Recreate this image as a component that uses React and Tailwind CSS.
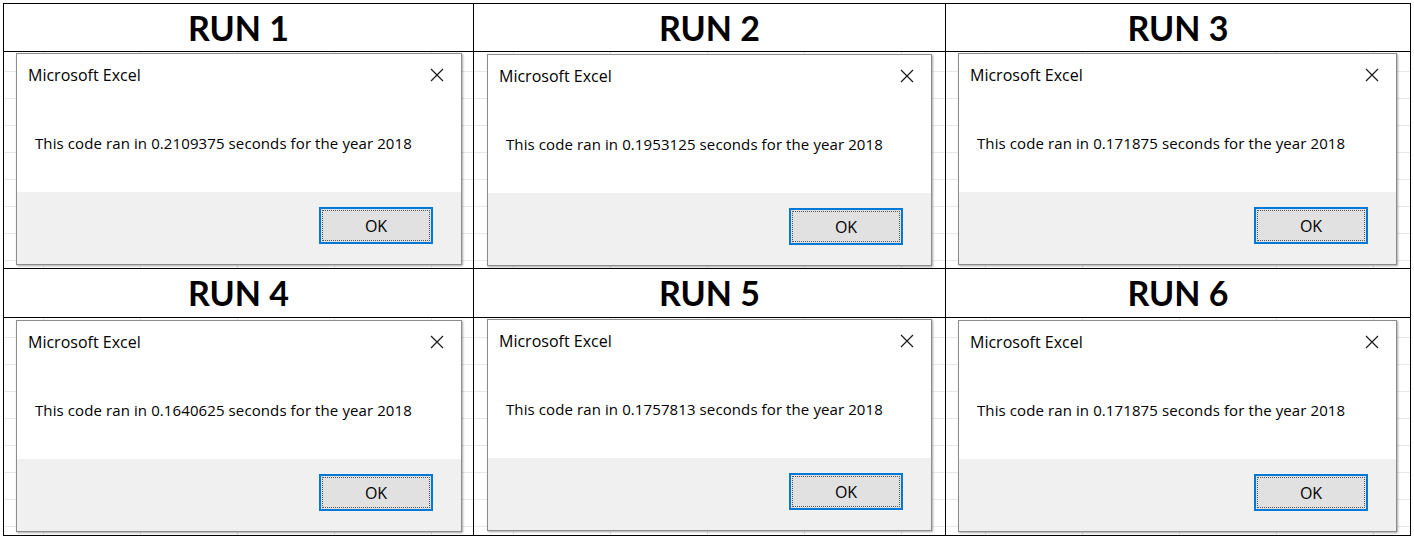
import React from 'react';

const runs = [
    { n: 1, time: '0.2109375', ml: 'ml-[12px]', mt: 'mt-[1px]', w: 'w-[446px]' },
    { n: 2, time: '0.1953125', ml: 'ml-[13px]', mt: 'mt-[2px]', w: 'w-[445px]' },
    { n: 3, time: '0.171875', ml: 'ml-[12px]', mt: 'mt-[1px]', w: 'w-[439px]' },
    { n: 4, time: '0.1640625', ml: 'ml-[12px]', mt: 'mt-[2px]', w: 'w-[446px]' },
    { n: 5, time: '0.1757813', ml: 'ml-[13px]', mt: 'mt-[1px]', w: 'w-[445px]' },
    { n: 6, time: '0.171875', ml: 'ml-[12px]', mt: 'mt-[2px]', w: 'w-[439px]' },
];

const colWidths = ['w-[470px]', 'w-[472px]', 'w-[465px]'];

const CloseIcon = () => (
    <svg width="14" height="14" viewBox="0 0 14 14" className="shrink-0">
        <path d="M1 1 L13 13 M13 1 L1 13" stroke="#1a1a1a" strokeWidth="1.2" fill="none" />
    </svg>
);

const MsgBox = ({ run }) => (
    <div
        className={`${run.ml} ${run.mt} ${run.w} h-[212px] flex flex-col bg-white border border-[#8c8c8c] shadow-[1px_1px_2px_rgba(0,0,0,0.35)]`}
        style={{ fontFamily: '"Open Sans", "Noto Sans", sans-serif' }}
    >
        <div className="h-[138px] flex flex-col">
            <div className="h-[41px] flex items-center justify-between pl-[11px] pr-[17px]">
                <span className="text-[16px] text-black">Microsoft Excel</span>
                <CloseIcon />
            </div>
            <div className="mt-[38px] pl-[18px] h-[20px] flex items-center text-[15px] text-black tracking-[0.1px]">
                This code ran in {run.time} seconds for the year 2018
            </div>
        </div>
        <div className="flex-1 bg-[#f0f0f0] flex justify-end items-start pt-[15px] pr-[28px]">
            <button className="relative w-[114px] h-[37px] bg-[#e1e1e1] border-2 border-[#0078d7] text-[16px] text-black flex items-center justify-center">
                <span className="absolute inset-[1px] border border-dotted border-[#555]" />
                OK
            </button>
        </div>
    </div>
);

const HeaderCell = ({ run, width, height }) => (
    <div className={`${width} ${height} border-r border-b border-black flex items-center justify-center`}>
        <span
            className="text-[34px] font-bold text-black leading-none"
            style={{ fontFamily: 'Lato, "Open Sans", sans-serif' }}
        >
            RUN {run.n}
        </span>
    </div>
);

const BoxCell = ({ run, width, height }) => (
    <div
        className={`${width} ${height} border-r border-b border-black overflow-hidden bg-white bg-[linear-gradient(to_right,#e8e8e8_1px,transparent_1px),linear-gradient(to_bottom,#e8e8e8_1px,transparent_1px)] bg-[size:97px_27px] bg-[position:39px_-8px]`}
    >
        <MsgBox run={run} />
    </div>
);

export default function App() {
    const rows = [runs.slice(0, 3), runs.slice(3, 6)];
    return (
        <div className="w-[1414px] h-[538px] bg-white pt-[3px] pl-[3px]">
            <div className="inline-flex flex-col border-l border-t border-black">
                {rows.map((row, ri) => (
                    <React.Fragment key={ri}>
                        <div className="flex">
                            {row.map((run, ci) => (
                                <HeaderCell key={run.n} run={run} width={colWidths[ci]} height={ri === 0 ? 'h-[48px]' : 'h-[49px]'} />
                            ))}
                        </div>
                        <div className="flex">
                            {row.map((run, ci) => (
                                <BoxCell key={run.n} run={run} width={colWidths[ci]} height={ri === 0 ? 'h-[217px]' : 'h-[218px]'} />
                            ))}
                        </div>
                    </React.Fragment>
                ))}
            </div>
        </div>
    );
}
